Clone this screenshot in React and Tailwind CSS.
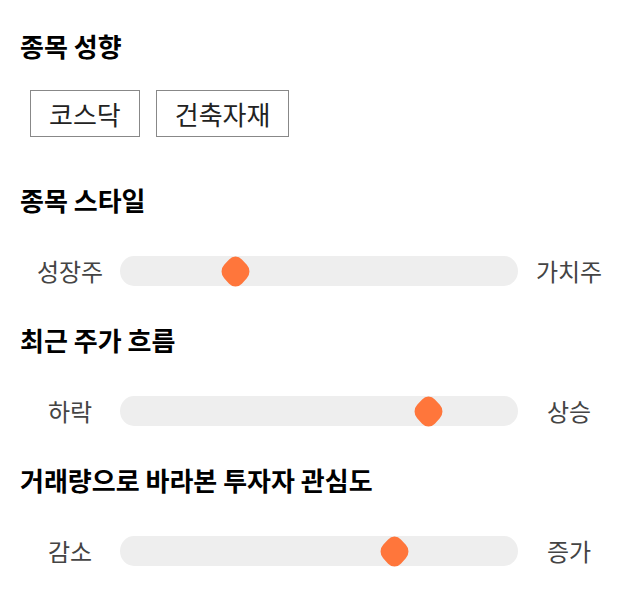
const FONT = { fontFamily: '"Noto Sans CJK KR", "Noto Sans", sans-serif' }

const sliders = [
  { title: '종목 스타일', left: '성장주', right: '가치주', value: 29 },
  { title: '최근 주가 흐름', left: '하락', right: '상승', value: 77.5 },
  { title: '거래량으로 바라본 투자자 관심도', left: '감소', right: '증가', value: 69 },
]

function Heading({ children }) {
  return <h2 className="h-[36px] text-[26px] font-bold leading-[36px] text-black">{children}</h2>
}

function Slider({ left, right, value }) {
  return (
    <div className="flex h-[40px] items-center">
      <div className="w-[100px] text-center text-[24px] text-[#444]">{left}</div>
      <div className="relative h-[30px] w-[398px] rounded-[14px/15px] bg-[#eeeeee]">
        <div
          className="absolute top-1/2 flex h-[30px] w-[28px] -translate-x-1/2 -translate-y-1/2 scale-y-[1.07] items-center justify-center"
          style={{ left: `${value}%` }}
        >
          <div className="h-[25px] w-[25px] shrink-0 rotate-45 rounded-[9px] bg-[#ff763b]" />
        </div>
      </div>
      <div className="w-[102px] text-center text-[24px] text-[#444]">{right}</div>
    </div>
  )
}

export default function App() {
  return (
    <div className="w-[640px] bg-white px-5 pt-[28px] pb-10" style={FONT}>
      <Heading>종목 성향</Heading>
      <div className="mt-[26px] flex gap-4 pl-[10px]">
        {['코스닥', '건축자재'].map((t) => (
          <span
            key={t}
            className="flex h-[47px] items-center border border-[#888] px-[18px] text-[26px] text-[#222]"
          >
            {t}
          </span>
        ))}
      </div>

      {sliders.map((s, i) => (
        <section key={s.title} className={i === 0 ? 'mt-[45px]' : 'mt-[31px]'}>
          <Heading>{s.title}</Heading>
          <div className="mt-[33px]">
            <Slider left={s.left} right={s.right} value={s.value} />
          </div>
        </section>
      ))}
    </div>
  )
}
